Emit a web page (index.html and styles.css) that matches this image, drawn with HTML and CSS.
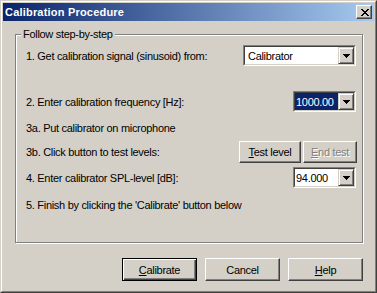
FILE: index.html
```html
<!DOCTYPE html>
<html lang="en">

<head>
  <meta charset="UTF-8" />
  <title>Calibration Procedure</title>
  <link rel="stylesheet" href="styles.css">
</head>

<body>
  <div class="window">
    <div class="frame">
      <!-- title bar -->
      <div class="titlebar">
        <span class="title">Calibration Procedure</span>
        <span class="close-btn">
          <svg width="8" height="7" viewBox="0 0 8 7" shape-rendering="crispEdges">
            <path d="M0 0h2v1h-2z M6 0h2v1h-2z M1 1h2v1h-2z M5 1h2v1h-2z M2 2h4v1h-4z M3 3h2v1h-2z M2 4h4v1h-4z M1 5h2v1h-2z M5 5h2v1h-2z M0 6h2v1h-2z M6 6h2v1h-2z" fill="#000" />
          </svg>
        </span>
      </div>

      <div class="content">
        <!-- steps -->
        <div class="group">
          <div class="group-title">Follow step-by-step</div>

          <div class="row row-1">
            <span>1. Get calibration signal (sinusoid) from:</span>
            <div class="combo combo-wide">
              <div class="combo-inner">
                <span class="combo-value list">Calibrator</span>
                <span class="combo-btn">
                  <svg width="7" height="4" viewBox="0 0 7 4" shape-rendering="crispEdges"><path d="M0 0h7v1h-7z M1 1h5v1h-5z M2 2h3v1h-3z M3 3h1v1h-1z" fill="#000" /></svg>
                </span>
              </div>
            </div>
          </div>

          <div class="row row-2">
            <span>2. Enter calibration frequency [Hz]:</span>
            <div class="combo">
              <div class="combo-inner">
                <span class="combo-value selected">1000.00</span>
                <span class="combo-btn">
                  <svg width="7" height="4" viewBox="0 0 7 4" shape-rendering="crispEdges"><path d="M0 0h7v1h-7z M1 1h5v1h-5z M2 2h3v1h-3z M3 3h1v1h-1z" fill="#000" /></svg>
                </span>
              </div>
            </div>
          </div>

          <div class="row row-3a">
            <span>3a. Put calibrator on microphone</span>
          </div>

          <div class="row row-3b">
            <span>3b. Click button to test levels:</span>
            <div class="btn-pair">
              <button class="btn btn-test"><u>T</u>est level</button>
              <button class="btn btn-end disabled"><u>E</u>nd test</button>
            </div>
          </div>

          <div class="row row-4">
            <span>4. Enter calibrator SPL-level [dB]:</span>
            <div class="combo">
              <div class="combo-inner">
                <span class="combo-value">94.000</span>
                <span class="combo-btn">
                  <svg width="7" height="4" viewBox="0 0 7 4" shape-rendering="crispEdges"><path d="M0 0h7v1h-7z M1 1h5v1h-5z M2 2h3v1h-3z M3 3h1v1h-1z" fill="#000" /></svg>
                </span>
              </div>
            </div>
          </div>

          <div class="row row-5">
            <span>5. Finish by clicking the 'Calibrate' button below</span>
          </div>
        </div>

        <!-- dialog buttons -->
        <div class="actions">
          <button class="btn btn-dlg default"><u>C</u>alibrate</button>
          <button class="btn btn-dlg">Cancel</button>
          <button class="btn btn-dlg"><u>H</u>elp</button>
        </div>
      </div>
    </div>
  </div>
</body>

</html>
```

FILE: styles.css
```css
* {
  margin: 0;
  padding: 0;
  box-sizing: border-box;
}

body {
  font-family: "Liberation Sans", Arial, sans-serif;
  font-size: 11px;
  letter-spacing: -0.3px;
  color: #000;
  background: #d4d0c8;
}

.window {
  width: 377px;
  height: 293px;
  border: 1px solid;
  border-color: #d4d0c8 #404040 #404040 #d4d0c8;
}

.frame {
  height: 100%;
  border: 1px solid;
  border-color: #fff #808080 #808080 #fff;
  padding: 1px;
  background: #d4d0c8;
}

.titlebar {
  display: flex;
  align-items: center;
  justify-content: space-between;
  height: 18px;
  padding-left: 2px;
  padding-right: 2px;
  background: linear-gradient(to right, #0a246a, #a6caf0);
}

.title {
  color: #fff;
  font-weight: bold;
  letter-spacing: 0.2px;
}

.close-btn {
  display: flex;
  align-items: center;
  justify-content: center;
  width: 16px;
  height: 14px;
  padding-left: 1px;
  background: #d4d0c8;
  border: 1px solid;
  border-color: #fff #404040 #404040 #fff;
  box-shadow: inset -1px -1px #808080;
}

.content {
  display: flex;
  flex-direction: column;
}

.group {
  display: flex;
  flex-direction: column;
  height: 209px;
  margin: 13px 11px 0 12px;
  padding: 0 6px 0 10px;
  border: 1px solid #808080;
  box-shadow: 1px 1px 0 #fff, inset 1px 1px 0 #fff;
}

.group-title {
  align-self: flex-start;
  margin: -8px 0 0 -5px;
  padding: 0 2px;
  line-height: 14px;
  background: #d4d0c8;
}

.row {
  display: flex;
  align-items: center;
  justify-content: space-between;
}

.row-1 {
  margin-top: 4px;
  height: 21px;
}

.row-2 {
  margin-top: 25px;
  height: 21px;
}

.row-3a {
  margin-top: 9px;
  height: 14px;
}

.row-3b {
  margin-top: 6px;
  height: 22px;
}

.row-4 {
  margin-top: 4px;
  height: 21px;
}

.row-5 {
  margin-top: 10px;
  height: 14px;
}

.combo {
  display: flex;
  width: 63px;
  height: 21px;
  border: 1px solid;
  border-color: #808080 #fff #fff #808080;
  background: #fff;
}

.combo-wide {
  width: 113px;
}

.combo-inner {
  display: flex;
  flex: 1;
  border: 1px solid;
  border-color: #404040 #d4d0c8 #d4d0c8 #404040;
}

.combo-value {
  display: flex;
  align-items: center;
  flex: 1;
  padding-left: 1px;
}

.combo-value.list {
  padding-left: 3px;
}

.combo-value.selected {
  background: #0a246a;
  color: #fff;
}

.combo-btn {
  display: flex;
  align-items: center;
  justify-content: center;
  width: 16px;
  background: #d4d0c8;
  border: 1px solid;
  border-color: #d4d0c8 #404040 #404040 #d4d0c8;
  box-shadow: inset 1px 1px #fff, inset -1px -1px #808080;
}

.btn {
  font: inherit;
  letter-spacing: inherit;
  color: #000;
  background: #d4d0c8;
  border: 1px solid;
  border-color: #fff #404040 #404040 #fff;
  box-shadow: inset -1px -1px #808080;
  outline: none;
}

.btn u {
  text-decoration: underline;
}

.btn-pair {
  display: flex;
  gap: 2px;
  margin-right: -1px;
}

.btn-test {
  width: 62px;
  height: 22px;
}

.btn-end {
  width: 54px;
  height: 22px;
}

.disabled {
  color: #808080;
  text-shadow: 1px 1px 0 #fff;
}

.actions {
  display: flex;
  justify-content: flex-end;
  gap: 8px;
  margin-top: 15px;
  padding-right: 11px;
}

.btn-dlg {
  width: 75px;
  height: 23px;
}

.default {
  border-color: #000;
  box-shadow: inset 1px 1px #fff, inset -1px -1px #404040, inset -2px -2px #808080;
}
```
